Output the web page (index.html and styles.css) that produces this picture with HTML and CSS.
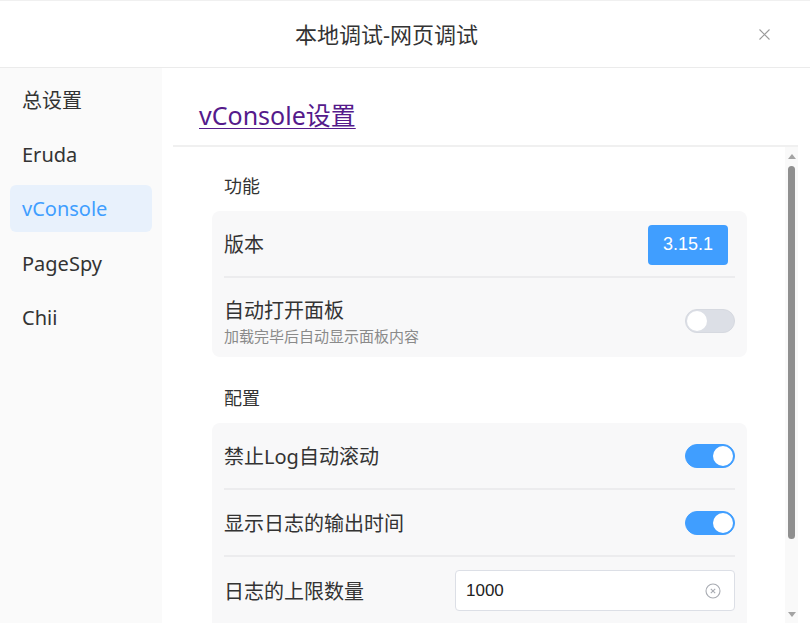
FILE: index.html
```html
<!DOCTYPE html>
<html lang="zh-CN">
<head>
<meta charset="utf-8">
<title>本地调试-网页调试</title>
<link rel="stylesheet" href="styles.css">
</head>
<body>
<div class="dialog">
  <header class="header">
    <div class="header-title">本地调试-网页调试</div>
    <button class="close" aria-label="关闭">
      <svg width="11" height="11" viewBox="0 0 11 11"><path d="M0.5 0.5L10.5 10.5M10.5 0.5L0.5 10.5" stroke="#9a9a9a" stroke-width="1.1" fill="none"/></svg>
    </button>
  </header>
  <div class="body">
    <nav class="sidebar">
      <div class="nav-item">总设置</div>
      <div class="nav-item">Eruda</div>
      <div class="nav-item active">vConsole</div>
      <div class="nav-item">PageSpy</div>
      <div class="nav-item">Chii</div>
    </nav>
    <main class="main">
      <div class="main-head"><a class="main-title" href="#">vConsole设置</a></div>
      <div class="scroll-wrap">
        <div class="scroll-content">
          <section class="section">
            <div class="section-title">功能</div>
            <div class="card">
              <div class="row">
                <div class="label">版本</div>
                <span class="badge">3.15.1</span>
              </div>
              <div class="row row-tall">
                <div class="label-group">
                  <div class="label">自动打开面板</div>
                  <div class="desc">加载完毕后自动显示面板内容</div>
                </div>
                <span class="switch"><span class="knob"></span></span>
              </div>
            </div>
          </section>
          <section class="section section-2">
            <div class="section-title">配置</div>
            <div class="card card-last">
              <div class="row">
                <div class="label">禁止Log自动滚动</div>
                <span class="switch on"><span class="knob"></span></span>
              </div>
              <div class="row">
                <div class="label">显示日志的输出时间</div>
                <span class="switch on"><span class="knob"></span></span>
              </div>
              <div class="row">
                <div class="label">日志的上限数量</div>
                <div class="input">
                  <span class="input-value">1000</span>
                  <svg class="clear" width="16" height="16" viewBox="0 0 16 16"><circle cx="8" cy="8" r="7" fill="none" stroke="#a8abb2" stroke-width="1.1"/><path d="M5.8 5.8L10.2 10.2M10.2 5.8L5.8 10.2" stroke="#a8abb2" stroke-width="1.1"/></svg>
                </div>
              </div>
            </div>
          </section>
        </div>
        <div class="scrollbar">
          <div class="sb-btn"><span class="tri-up"></span></div>
          <div class="sb-thumb"></div>
          <div class="sb-space"></div>
          <div class="sb-btn"><span class="tri-down"></span></div>
        </div>
      </div>
    </main>
  </div>
</div>
</body>
</html>
```

FILE: styles.css
```css
* { box-sizing: border-box; }
html, body { margin: 0; padding: 0; background: #fff; }
body {
  font-family: "Noto Sans", "Noto Sans CJK SC", sans-serif;
  color: #333;
}
.dialog {
  width: 810px;
  height: 623px;
  display: flex;
  flex-direction: column;
  overflow: hidden;
  border-top: 1px solid #f0f0f0;
}
.header {
  position: relative;
  height: 67px;
  flex: none;
  display: flex;
  align-items: center;
  padding-right: 37px;
  border-bottom: 1px solid #ebebeb;
}
.header-title {
  flex: 1;
  text-align: center;
  font-size: 22px;
  color: #333;
  line-height: 30px;
}
.close {
  position: absolute;
  right: 40px;
  top: 28px;
  width: 11px;
  height: 11px;
  padding: 0;
  border: 0;
  background: none;
  display: flex;
}
.body {
  flex: 1;
  display: flex;
  min-height: 0;
}
.sidebar {
  width: 162px;
  flex: none;
  background: #fafafa;
  padding: 8px 10px 0;
}
.nav-item {
  height: 47px;
  margin-bottom: 7.5px;
  padding-left: 12px;
  display: flex;
  align-items: center;
  font-size: 20px;
  color: #333;
  border-radius: 6px;
}
.nav-item.active {
  background: #e8f1fc;
  color: #409eff;
}
.main {
  flex: 1;
  display: flex;
  flex-direction: column;
  min-width: 0;
  padding: 0 12px 0 11px;
}
.main-head {
  height: 79px;
  flex: none;
  border-bottom: 2px solid #f0f0f0;
  padding: 16px 0 0 26px;
  display: flex;
  align-items: center;
}
.main-title {
  font-size: 25px;
  color: #551a8b;
  text-decoration: underline;
  text-underline-offset: 3px;
  text-decoration-thickness: 1px;
  line-height: 32px;
}
.scroll-wrap {
  flex: 1;
  display: flex;
  min-height: 0;
  overflow: hidden;
}
.scroll-content {
  flex: 1;
  padding: 0 38px 0 39px;
  overflow: hidden;
}
.section-title {
  font-size: 18px;
  line-height: 24px;
  padding: 27px 12px 13px;
  color: #333;
}
.section-2 .section-title { padding-top: 29px; }
.card {
  background: #f8f8f9;
  border-radius: 8px;
  padding: 0 12px;
}
.card-last { padding-bottom: 20px; }
.row {
  min-height: 67px;
  display: flex;
  align-items: center;
  justify-content: space-between;
  border-bottom: 2px solid #ececee;
}
.row:last-child { border-bottom: 0; }
.row-tall {
  padding: 18px 0 12px;
  min-height: 0;
}
.label {
  font-size: 20px;
  line-height: 24px;
  padding-top: 3px;
  color: #333;
}
.desc {
  margin-top: 4px;
  font-size: 15px;
  line-height: 18px;
  color: #8a8a8a;
}
.badge {
  width: 80px;
  height: 40px;
  border-radius: 4px;
  background: #409eff;
  color: #fff;
  font-family: "Liberation Sans", Arial, sans-serif;
  font-size: 18px;
  display: flex;
  align-items: center;
  justify-content: center;
  margin: 2px 7px 0 0;
}
.switch {
  width: 50px;
  height: 24px;
  border-radius: 12px;
  background: #dcdfe6;
  border: 1px solid #d6d9e0;
  padding: 1px;
  display: flex;
  align-items: center;
}
.switch .knob {
  width: 20px;
  height: 20px;
  border-radius: 50%;
  background: #fff;
}
.switch.on {
  background: #409eff;
  border-color: #409eff;
  justify-content: flex-end;
}
.input {
  width: 280px;
  height: 41px;
  border: 1px solid #dcdfe6;
  border-radius: 4px;
  background: #fff;
  display: flex;
  align-items: center;
  justify-content: space-between;
  padding: 0 13px 0 10px;
}
.input-value {
  font-family: "Liberation Sans", Arial, sans-serif;
  font-size: 17px;
  color: #222;
}
.clear { display: block; }
.scrollbar {
  width: 13px;
  flex: none;
  background: #f9f9f9;
  display: flex;
  flex-direction: column;
  align-items: center;
}
.sb-btn {
  height: 18px;
  width: 13px;
  display: flex;
  align-items: center;
  justify-content: center;
  flex: none;
}
.tri-up {
  width: 0; height: 0;
  border-left: 4px solid transparent;
  border-right: 4px solid transparent;
  border-bottom: 5px solid #a3a3a3;
}
.tri-down {
  width: 0; height: 0;
  border-left: 4px solid transparent;
  border-right: 4px solid transparent;
  border-top: 5px solid #a3a3a3;
}
.sb-thumb {
  width: 7px;
  height: 373px;
  margin-top: 1px;
  border-radius: 4px;
  background: #8f8f8f;
  flex: none;
}
.sb-space { flex: 1; }
```
